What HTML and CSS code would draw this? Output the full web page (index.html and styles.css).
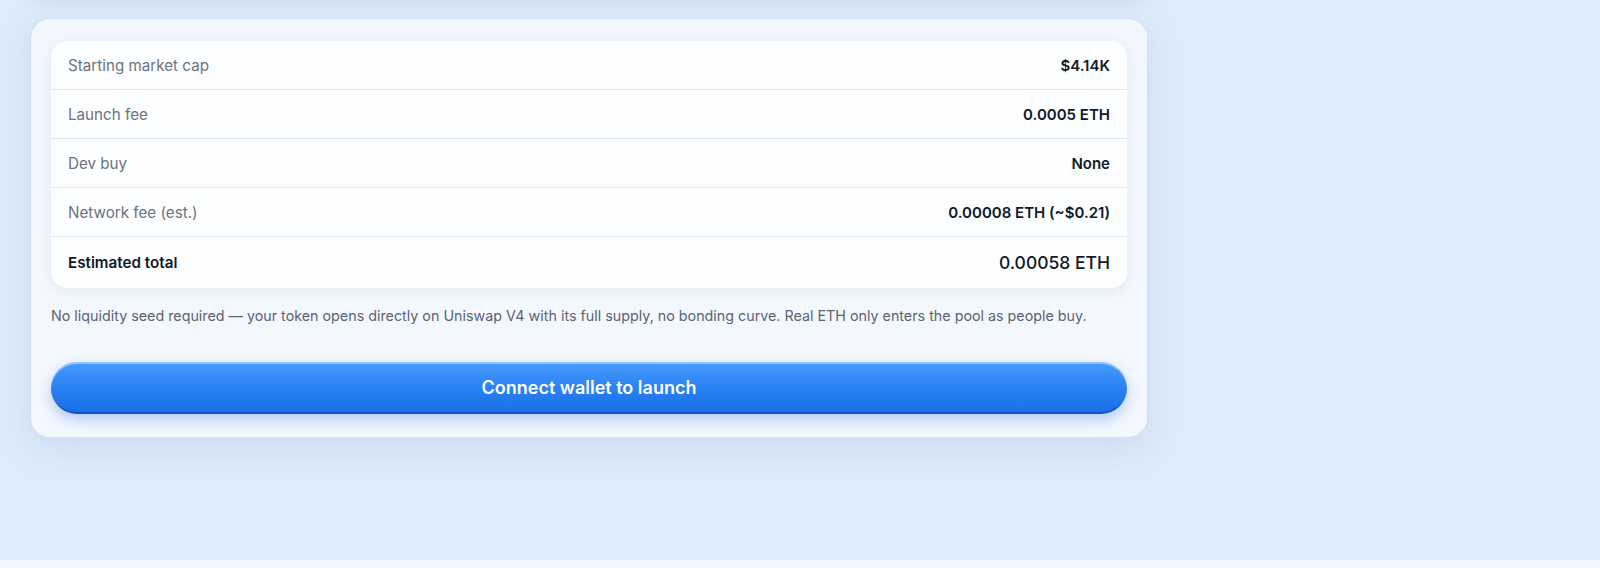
FILE: index.html
```html
<!DOCTYPE html>
<html lang="en">
<head>
    <meta charset="UTF-8">
    <meta name="viewport" content="width=device-width, initial-scale=1.0">
    <title>Launch token</title>
    <link rel="stylesheet" href="styles.css">
</head>
<body>
    <main class="page">
        <!-- previous step card, scrolled mostly out of view -->
        <div class="prev-card"></div>

        <section class="launch-card">
            <div class="summary">
                <div class="summary-row">
                    <span class="label">Starting market cap</span>
                    <span class="value">$4.14K</span>
                </div>
                <div class="summary-row">
                    <span class="label">Launch fee</span>
                    <span class="value">0.0005 ETH</span>
                </div>
                <div class="summary-row">
                    <span class="label">Dev buy</span>
                    <span class="value">None</span>
                </div>
                <div class="summary-row">
                    <span class="label">Network fee (est.)</span>
                    <span class="value">0.00008 ETH (~$0.21)</span>
                </div>
                <div class="summary-row total">
                    <span class="label">Estimated total</span>
                    <span class="value">0.00058 ETH</span>
                </div>
            </div>

            <p class="note">No liquidity seed required — your token opens directly on Uniswap V4 with its full supply, no bonding curve. Real ETH only enters the pool as people buy.</p>

            <button class="connect-button">Connect wallet to launch</button>
        </section>
    </main>

    <footer class="footer"></footer>
</body>
</html>
```

FILE: styles.css
```css
body {
    font-family: "Inter", "Noto Sans", sans-serif;
    margin: 0;
    padding: 0;
    background: #ddebfa;
    color: #111827;
}

.page {
    padding: 0 0 0 30px;
    height: 560px;
    box-sizing: border-box;
    overflow: hidden;
}

.prev-card {
    width: 1118px;
    height: 200px;
    margin-top: -208px;
    margin-bottom: 26px;
    border-radius: 20px;
    background: #eef5fd;
    box-shadow: 0 6px 20px rgba(120, 150, 200, 0.28);
}

.launch-card {
    width: 1118px;
    box-sizing: border-box;
    padding: 22px 20px 23px;
    background: linear-gradient(180deg, #f2f7fe 0%, #f4f8fe 100%);
    border: 1px solid #d2dfee;
    border-radius: 20px;
    box-shadow: 0 10px 30px rgba(140, 170, 220, 0.22);
}

.summary {
    background: #fdfeff;
    border-radius: 16px;
    box-shadow: 0 3px 12px rgba(150, 170, 200, 0.18);
    overflow: hidden;
}

.summary-row {
    display: flex;
    justify-content: space-between;
    align-items: center;
    height: 48px;
    padding: 0 17px;
    border-bottom: 1px solid #dfe7ee;
}

.summary-row:last-child {
    border-bottom: none;
    height: 51px;
}

.label {
    font-size: 15.2px;
    color: #6b7280;
}

.value {
    font-size: 15px;
    font-weight: 600;
    color: #111827;
}

.total .label {
    color: #111827;
    font-weight: 600;
}

.total .value {
    font-size: 17.5px;
    font-weight: 500;
}

.note {
    margin: 19px 0 37px;
    font-size: 14.3px;
    line-height: 18px;
    color: #5b6472;
}

.connect-button {
    display: block;
    width: 100%;
    height: 52px;
    border: none;
    border-radius: 26px;
    background: linear-gradient(180deg, #4a9cfb 0%, #2a82f4 50%, #1a6fe8 100%);
    border-bottom: 2px solid #0a56c8;
    box-shadow: inset 0 2px 0 rgba(255, 255, 255, 0.4), 0 6px 14px rgba(40, 110, 220, 0.32);
    color: #fff;
    font-family: inherit;
    font-size: 18px;
    font-weight: 600;
    cursor: pointer;
}

.footer {
    height: 8px;
    background: #eff8fc;
}
```
